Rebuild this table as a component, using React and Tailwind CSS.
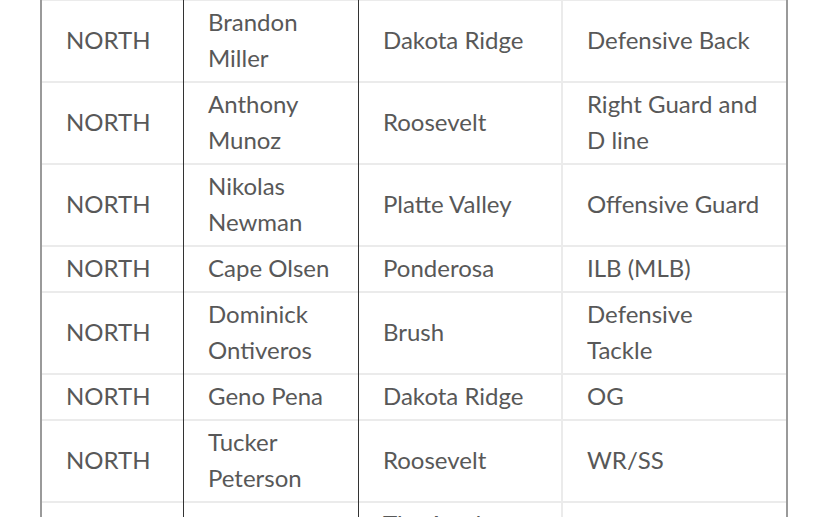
import React from "react";

const rows = [
  ["NORTH", "Brandon Miller", "Dakota Ridge", "Defensive Back"],
  ["NORTH", "Anthony Munoz", "Roosevelt", "Right Guard and D line"],
  ["NORTH", "Nikolas Newman", "Platte Valley", "Offensive Guard"],
  ["NORTH", "Cape Olsen", "Ponderosa", "ILB (MLB)"],
  ["NORTH", "Dominick Ontiveros", "Brush", "Defensive Tackle"],
  ["NORTH", "Geno Pena", "Dakota Ridge", "OG"],
  ["NORTH", "Tucker Peterson", "Roosevelt", "WR/SS"],
  ["NORTH", "Jacob Quintana", "The Academy of Charter Schools", "Linebacker"],
];

export default function App() {
  return (
    <div
      className="w-[828px] h-[517px] overflow-hidden bg-white"
      style={{ fontFamily: "Lato, 'Open Sans', sans-serif" }}
    >
      <div className="ml-[40px] w-[748px] -mt-px border-x-2 border-[#9a9a9a] text-[24px] leading-[36px] text-[#585858]">
        {rows.map((r, i) => (
          <div key={i} className="flex border-t-2 border-[#ebebeb]">
            <div className="w-[141px] shrink-0 px-[24px] pt-[3px] pb-[5px] flex items-center">
              {r[0]}
            </div>
            <div className="w-[175px] shrink-0 border-l border-[#333] -mt-[2px] pt-[5px] px-[24px] pb-[5px] flex items-center">
              {r[1]}
            </div>
            <div className="w-[203px] shrink-0 border-l border-[#333] -mt-[2px] pt-[5px] px-[24px] pb-[5px] flex items-center">
              {r[2]}
            </div>
            <div className="w-[225px] shrink-0 border-l-2 border-[#ebebeb] px-[24px] pt-[3px] pb-[5px] flex items-center">
              {r[3]}
            </div>
          </div>
        ))}
      </div>
    </div>
  );
}
